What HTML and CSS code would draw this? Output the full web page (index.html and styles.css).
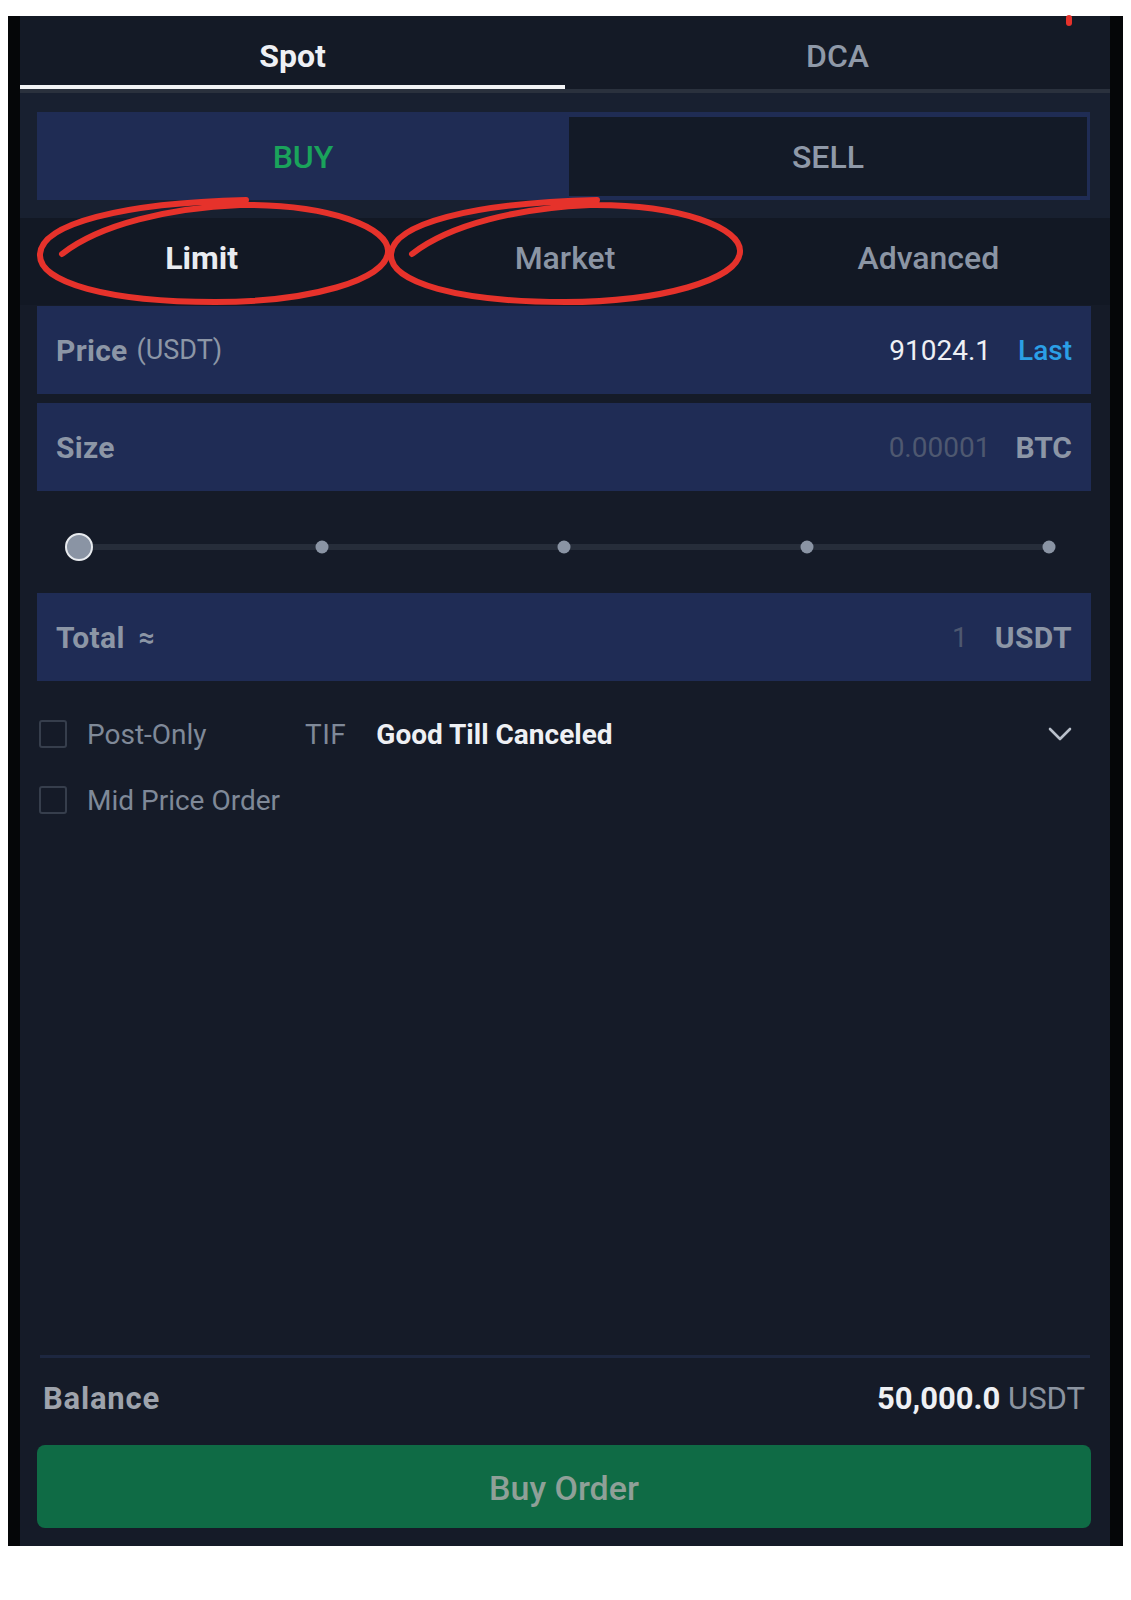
FILE: index.html
```html
<!DOCTYPE html>
<html>
<head>
<meta charset="utf-8">
<link rel="stylesheet" href="styles.css">
</head>
<body>
<div class="frame">
  <div class="panel">
    <div class="tabs">
      <div class="tab active">Spot</div>
      <div class="tab">DCA</div>
    </div>
    <div class="side-wrap">
      <div class="side">
        <div class="seg buy">BUY</div>
        <div class="seg sell">SELL</div>
      </div>
    </div>
    <div class="types">
      <div class="type active">Limit</div>
      <div class="type">Market</div>
      <div class="type">Advanced</div>
    </div>
    <div class="content">
      <div class="field">
        <span class="label">Price</span><span class="sub">(USDT)</span>
        <span class="value white">91024.1</span><span class="unit blue">Last</span>
      </div>
      <div class="field">
        <span class="label">Size</span>
        <span class="value dim">0.00001</span><span class="unit">BTC</span>
      </div>
      <div class="slider">
        <div class="track">
          <span class="dot thumb" style="left:0%"></span>
          <span class="dot" style="left:25%"></span>
          <span class="dot" style="left:50%"></span>
          <span class="dot" style="left:75%"></span>
          <span class="dot" style="left:100%"></span>
        </div>
      </div>
      <div class="field">
        <span class="label">Total</span><span class="approx">≈</span>
        <span class="value dim">1</span><span class="unit usdt">USDT</span>
      </div>
      <div class="opt first">
        <div class="check-group"><span class="box"></span><span class="opt-label">Post-Only</span></div>
        <span class="tif">TIF</span>
        <span class="tif-val">Good Till Canceled</span>
        <svg class="chev" width="24" height="15" viewBox="0 0 24 15"><path d="M2 2 L12 12 L22 2" fill="none" stroke="#b9c0cb" stroke-width="2.6" stroke-linecap="round" stroke-linejoin="round"/></svg>
      </div>
      <div class="opt">
        <div class="check-group"><span class="box"></span><span class="opt-label">Mid Price Order</span></div>
      </div>
    </div>
    <div class="spacer"></div>
    <div class="bottom">
      <div class="sep"></div>
      <div class="balance">
        <span class="bal-label">Balance</span>
        <span class="bal-val"><b>50,000.0</b> USDT</span>
      </div>
      <div class="btn">Buy Order</div>
    </div>
    <svg class="marks" width="1090" height="400" viewBox="20 16 1090 400">
      <g fill="none" stroke="#e6322b" stroke-width="6" stroke-linecap="round" stroke-linejoin="round">
        <path d="M 62 254 C 100 224, 170 208, 240 205 C 330 204, 390 228, 388 252 C 386 280, 310 302, 215 302 C 110 302, 38 283, 40 254 C 42 224, 120 203, 246 200"/>
        <path d="M 412 254 C 450 224, 520 208, 590 205 C 680 204, 742 228, 740 252 C 738 280, 660 302, 565 302 C 460 302, 389 283, 391 254 C 393 224, 470 203, 597 200"/>
        <path d="M 1069 18 L 1069 23"/>
      </g>
    </svg>
  </div>
</div>
</body>
</html>
```
FILE: styles.css
```css
* { box-sizing: border-box; }
html, body { margin: 0; padding: 0; background: #ffffff; }
body {
  font-family: Roboto, "Liberation Sans", Arial, sans-serif;
  color: #8c96a6;
}
.frame {
  margin: 16px 0 0 8px;
  width: 1115px;
  height: 1530px;
  background: #050608;
  padding: 0 13px 0 12px;
}
.panel {
  position: relative;
  height: 100%;
  background: #151b28;
  display: flex;
  flex-direction: column;
}
.tabs {
  display: flex;
  background: #141a26;
  border-bottom: 4px solid #2a313d;
}
.tab {
  flex: 1;
  height: 73px;
  display: flex;
  align-items: center;
  justify-content: center;
  padding-top: 6px;
  font-size: 32px;
  font-weight: 500;
  color: #8f99a8;
}
.tab.active {
  color: #eef0f4;
  font-weight: 700;
  box-shadow: inset 0 -4px 0 #f2f3f5;
}
.side-wrap {
  background: #182030;
  padding: 19px 20px 18px 17px;
}
.side {
  display: flex;
  height: 88px;
  background: #1f2c54;
  padding: 5px 3px 4px 0;
}
.seg {
  display: flex;
  align-items: center;
  justify-content: center;
  font-size: 32px;
  font-weight: 500;
}
.buy { width: 532px; color: #1aa35b; }
.sell { flex: 1; background: #131a27; color: #8f99a8; }
.types {
  display: flex;
  height: 87px;
  background: #121824;
}
.type {
  flex: 1;
  display: flex;
  align-items: center;
  justify-content: center;
  font-size: 32px;
  font-weight: 500;
  color: #8b95a4;
  padding-bottom: 8px;
}
.type.active { color: #e9ecf1; font-weight: 700; }
.content {
  padding: 1px 19px 0 17px;
  display: flex;
  flex-direction: column;
}
.field {
  height: 88px;
  background: #1f2c55;
  display: flex;
  align-items: center;
  padding: 0 19px 0 19px;
  margin-bottom: 9px;
  font-size: 28px;
}
.label { font-weight: 700; color: #8c96a6; font-size: 30px; letter-spacing: 0.3px; }
.sub { font-size: 27px; color: #8c96a6; margin-left: 9px; font-weight: 400; }
.approx { margin-left: 14px; font-size: 28px; color: #8c96a6; font-weight: 700; }
.value { margin-left: auto; font-weight: 400; }
.white { color: #eef0f4; }
.dim { color: #4e5870; }
.unit { margin-left: 25px; font-weight: 700; color: #8c96a6; font-size: 30px; }
.unit.usdt { margin-left: 27px; letter-spacing: 0.5px; }
.blue { color: #2b9fe6; font-weight: 500; font-size: 28px; margin-left: 27px; }
.slider {
  height: 102px;
  margin-top: -9px;
  padding: 53px 0 0 42px;
}
.track {
  position: relative;
  width: 970px;
  height: 6px;
  background: #262d3a;
  border-radius: 3px;
}
.dot {
  position: absolute;
  top: 50%;
  width: 13px;
  height: 13px;
  border-radius: 50%;
  background: #8a94a4;
  transform: translate(-50%, -50%);
}
.dot.thumb {
  width: 28px;
  height: 28px;
  background: #8a94a4;
  border: 2px solid #e8ebef;
}
.opt {
  display: flex;
  align-items: center;
  height: 44px;
  font-size: 28px;
}
.opt.first { margin-top: 22px; margin-bottom: 22px; }
.check-group {
  display: flex;
  align-items: center;
  width: 268px;
  padding-left: 2px;
}
.box {
  width: 28px;
  height: 28px;
  border: 2px solid #363e4c;
  border-radius: 3px;
  margin-right: 20px;
}
.opt-label { color: #7f8998; font-weight: 400; }
.tif { color: #7f8998; font-weight: 400; margin-right: 30px; letter-spacing: 0.5px; }
.tif-val { color: #eef0f4; font-weight: 700; }
.chev { margin-left: auto; margin-right: 19px; }
.spacer { flex: 1; }
.bottom {
  padding: 0 19px 18px 17px;
}
.sep {
  height: 3px;
  background: #1d2740;
  margin: 0 1px 0 3px;
}
.balance {
  height: 80px;
  display: flex;
  align-items: center;
  justify-content: space-between;
  padding: 0 6px;
  font-size: 31px;
}
.bal-label { font-weight: 700; color: #9ea3ac; letter-spacing: 0.8px; }
.bal-val { color: #8c94a0; font-weight: 400; }
.bal-val b { color: #eef0f4; font-weight: 700; }
.btn {
  margin-top: 7px;
  height: 83px;
  background: #0f6b45;
  border-radius: 8px;
  display: flex;
  align-items: center;
  justify-content: center;
  font-size: 34px;
  font-weight: 500;
  color: #8fa098;
  padding-top: 2px;
}
.marks {
  position: absolute;
  top: 0;
  left: 0;
  overflow: visible;
  pointer-events: none;
}
```
